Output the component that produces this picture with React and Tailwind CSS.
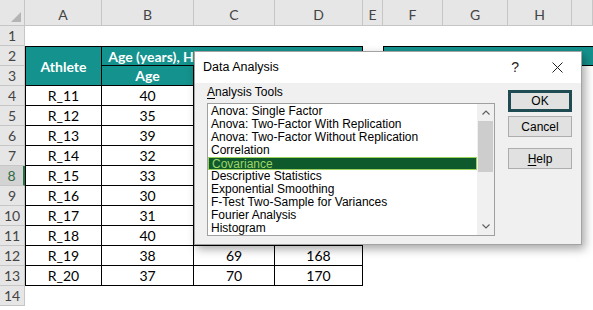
import React from 'react';

const teal = 'bg-[#14928d]';

// C/D values for rows 4-11 sit behind the dialog in the screenshot
const data = [
  ['R_11', 40, '', ''],
  ['R_12', 35, '', ''],
  ['R_13', 39, '', ''],
  ['R_14', 32, '', ''],
  ['R_15', 33, '', ''],
  ['R_16', 30, '', ''],
  ['R_17', 31, '', ''],
  ['R_18', 40, '', ''],
  ['R_19', 38, 69, 168],
  ['R_20', 37, 70, 170],
];

const tools = [
  'Anova: Single Factor',
  'Anova: Two-Factor With Replication',
  'Anova: Two-Factor Without Replication',
  'Correlation',
  'Covariance',
  'Descriptive Statistics',
  'Exponential Smoothing',
  'F-Test Two-Sample for Variances',
  'Fourier Analysis',
  'Histogram',
];

function RowHead({ n, active }) {
  return (
    <div
      className={`flex items-center justify-center border-b ${
        active
          ? 'bg-[#d3d3d3] text-[#2f6b45] border-r-2 border-r-[#217346] border-b-[#c6c6c6]'
          : 'bg-[#e6e6e6] text-[#444] border-r border-[#c6c6c6]'
      }`}
    >
      {n}
    </div>
  );
}

function Cell({ children, first }) {
  return (
    <div className={`flex items-center justify-center border-r border-b border-black ${first ? 'border-l' : ''}`}>
      {children}
    </div>
  );
}

function Sheet() {
  return (
    <div className="grid grid-cols-[25px_77px_92px_81px_88px_20px_60px_65px_64px_1fr] grid-rows-[26px_repeat(14,20px)]">
      <div className="bg-[#e6e6e6] border-r border-b border-[#c6c6c6] flex items-end justify-end pr-[3px] pb-[3px]">
        <svg width="10" height="10" viewBox="0 0 10 10">
          <polygon points="10,0 10,10 0,10" fill="#b4b4b4" />
        </svg>
      </div>
      {['A', 'B', 'C', 'D', 'E', 'F', 'G', 'H', ''].map((l, i) => (
        <div
          key={i}
          className="bg-[#e6e6e6] border-r border-b border-[#c6c6c6] flex items-center justify-center pt-[3px] text-[#444]"
        >
          {l}
        </div>
      ))}

      <RowHead n={1} />
      <div className="col-span-9" />

      <RowHead n={2} />
      <div className={`row-span-2 ${teal} border border-black flex items-center justify-center font-bold text-white`}>
        Athlete
      </div>
      <div className={`col-span-3 ${teal} border-t border-r border-b border-black flex items-center justify-center overflow-hidden whitespace-nowrap font-bold text-white`}>
        Age (years), Height (inches), Weight (lbs)
      </div>
      <div />
      <div className={`col-span-4 ${teal} border-t border-b border-l border-black flex items-center justify-center font-bold text-white whitespace-nowrap`}>
        Covariance Matrix
      </div>

      <RowHead n={3} />
      <div className={`${teal} border-r border-b border-black flex items-center justify-center font-bold text-white`}>
        Age
      </div>
      <div className={`${teal} border-r border-b border-black`} />
      <div className={`${teal} border-r border-b border-black`} />
      <div className="col-span-5" />

      {data.map((r, i) => (
        <React.Fragment key={r[0]}>
          <RowHead n={i + 4} active={i + 4 === 8} />
          <Cell first>{r[0]}</Cell>
          <Cell>{r[1]}</Cell>
          <Cell>{r[2]}</Cell>
          <Cell>{r[3]}</Cell>
          <div className="col-span-5" />
        </React.Fragment>
      ))}

      <RowHead n={14} />
      <div className="col-span-9" />
    </div>
  );
}

function Chevron({ up }) {
  return (
    <svg width="8" height="5" viewBox="0 0 8 5">
      <polyline
        points={up ? '0.5,4.5 4,1 7.5,4.5' : '0.5,0.5 4,4 7.5,0.5'}
        fill="none"
        stroke="#606060"
        strokeWidth="1.2"
      />
    </svg>
  );
}

function Dialog() {
  return (
    <div className="absolute left-[194px] top-[51px] w-[388px] h-[194px] border border-[#a3a3a3] bg-[#f0f0f0] shadow-[3px_4px_9px_rgba(0,0,0,0.35)] flex flex-col font-['Liberation_Sans',sans-serif] text-[12px] text-black">
      <div className="h-[31px] bg-white flex items-center pl-[8px] pr-[18px]">
        <span className="text-[12.5px]">Data Analysis</span>
        <span className="ml-auto text-[14px] text-[#222]">?</span>
        <svg className="ml-[33px]" width="11" height="11" viewBox="0 0 11 11">
          <path d="M0.5 0.5 L10.5 10.5 M10.5 0.5 L0.5 10.5" stroke="#222" strokeWidth="1" />
        </svg>
      </div>

      <div className="flex-1 flex pl-[12px]">
        <div className="flex flex-col pt-[2px]">
          <div className="h-[14px] leading-[14px]">
            <span className="underline underline-offset-2">A</span>nalysis Tools
          </div>
          <div className="mt-[4px] w-[288px] h-[133px] border border-[#a0a0a0] bg-white flex">
            <div className="flex-1 pt-[1px]">
              {tools.map((t) => (
                <div
                  key={t}
                  className={`h-[13px] leading-[13px] pl-[3px] whitespace-nowrap ${
                    t === 'Covariance'
                      ? 'bg-[#0f5a2d] text-[#9fd468] border border-[#9bd25a] pl-[2px] leading-[11px]'
                      : ''
                  }`}
                >
                  {t}
                </div>
              ))}
            </div>
            <div className="w-[17px] bg-[#f0f0f0] flex flex-col">
              <div className="h-[17px] flex items-center justify-center">
                <Chevron up />
              </div>
              <div className="flex-1 px-[1px]">
                <div className="h-[51px] bg-[#cdcdcd]" />
              </div>
              <div className="h-[17px] flex items-center justify-center">
                <Chevron />
              </div>
            </div>
          </div>
        </div>

        <div className="ml-[13px] pt-[7px] flex flex-col">
          <button className="w-[64px] h-[22px] border-[3px] border-[#1e4c52] bg-[#e1e1e1] flex items-center justify-center">
            OK
          </button>
          <button className="mt-[4px] w-[64px] h-[21px] border border-[#adadad] bg-[#e1e1e1] flex items-center justify-center">
            Cancel
          </button>
          <button className="mt-[11px] w-[64px] h-[21px] border border-[#adadad] bg-[#e1e1e1] flex items-center justify-center">
            <span>
              <span className="underline underline-offset-2">H</span>elp
            </span>
          </button>
        </div>
      </div>
    </div>
  );
}

export default function App() {
  return (
    <div className="relative w-[593px] h-[310px] overflow-hidden bg-white font-['Lato',sans-serif] text-[14px] text-black">
      <Sheet />
      <Dialog />
    </div>
  );
}
